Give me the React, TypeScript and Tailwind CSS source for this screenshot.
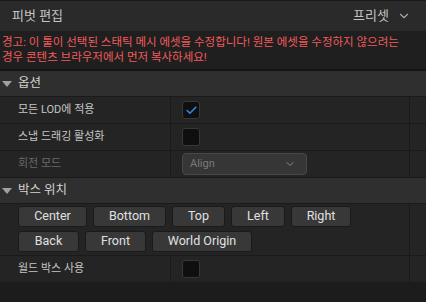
import { Check, ChevronDown } from "lucide-react";

const font = { fontFamily: 'Roboto, "Noto Sans CJK KR", sans-serif' };

const SectionHeader = ({ title }: { title: string }) => (
  <div className="h-[26px] bg-[#2f2f2f] border-b border-[#1a1a1a] flex items-center">
    <svg width="10" height="6" viewBox="0 0 10 6" className="ml-[2px] mr-[6px]">
      <path d="M0 0 L10 0 L5 6 Z" fill="#a0a0a0" />
    </svg>
    <span className="text-[12.5px] text-[#d4d4d4]">{title}</span>
  </div>
);

const Row = ({
  label,
  disabled,
  children,
}: {
  label: string;
  disabled?: boolean;
  children?: React.ReactNode;
}) => (
  <div className="h-[27px] bg-[#242424] border-b border-[#1a1a1a] flex">
    <div
      className={`w-[171px] border-r border-[#1a1a1a] pl-[18px] flex items-center text-[11px] ${
        disabled ? "text-[#6a6a6a]" : "text-[#c4c4c4]"
      }`}
    >
      {label}
    </div>
    <div className="w-[239px] border-r border-[#1a1a1a] pl-[11px] flex items-center">
      {children}
    </div>
    <div className="flex-1" />
  </div>
);

const CheckBox = ({ checked }: { checked?: boolean }) => (
  <div className="w-[18px] h-[18px] rounded-[3px] bg-[#0f0f0f] border border-[#383838] flex items-center justify-center">
    {checked && <Check size={13} strokeWidth={3} color="#2a8cf0" />}
  </div>
);

const BoxButton = ({ label, width }: { label: string; width: string }) => (
  <button
    type="button"
    className={`${width} h-[21px] rounded-[3px] bg-[#383838] border border-[#1a1a1a] text-[12.5px] text-[#e0e0e0] flex items-center justify-center`}
  >
    {label}
  </button>
);

const App = () => {
  return (
    <div className="w-[426px] h-[302px] bg-[#1c1c1c] overflow-hidden select-none" style={font}>
      <div className="h-[31px] bg-[#2a2a2a] border-t border-[#1a1a1a] flex items-center justify-between pl-[12px] pr-[15px]">
        <span className="text-[13px] text-[#c4c4c4]">피벗 편집</span>
        <div className="flex items-center gap-[8px] text-[13px] text-[#c4c4c4]">
          <span>프리셋</span>
          <ChevronDown size={14} strokeWidth={2} color="#a8a8a8" />
        </div>
      </div>

      <div className="h-[38px] bg-[#1f1f1f] pl-[2px] pt-[4px] text-[11.5px] leading-[15px] text-[#f25b5b]">
        <p>경고: 이 툴이 선택된 스태틱 메시 에셋을 수정합니다! 원본 에셋을 수정하지 않으려는</p>
        <p>경우 콘텐츠 브라우저에서 먼저 복사하세요!</p>
      </div>
      <div className="h-[2px] bg-[#141414]" />

      <SectionHeader title="옵션" />
      <Row label="모든 LOD에 적용">
        <CheckBox checked />
      </Row>
      <Row label="스냅 드래깅 활성화">
        <CheckBox />
      </Row>
      <Row label="회전 모드" disabled>
        <div className="w-[125px] h-[22px] rounded-[4px] bg-[#363636] border border-[#474747] flex items-center justify-between pl-[7px] pr-[10px]">
          <span className="text-[11px] text-[#7a7a7a]">Align</span>
          <ChevronDown size={12} strokeWidth={2} color="#8a8a8a" />
        </div>
      </Row>

      <SectionHeader title="박스 위치" />
      <div className="h-[52px] bg-[#242424] border-b border-[#1a1a1a] flex">
        <div className="w-[410px] border-r border-[#1a1a1a] pl-[18px] pt-[2px] flex flex-col gap-[4px]">
          <div className="flex gap-[6px]">
            <BoxButton label="Center" width="w-[69px]" />
            <BoxButton label="Bottom" width="w-[73px]" />
            <BoxButton label="Top" width="w-[53px]" />
            <BoxButton label="Left" width="w-[54px]" />
            <BoxButton label="Right" width="w-[60px]" />
          </div>
          <div className="flex gap-[6px]">
            <BoxButton label="Back" width="w-[61px]" />
            <BoxButton label="Front" width="w-[61px]" />
            <BoxButton label="World Origin" width="w-[100px]" />
          </div>
        </div>
        <div className="flex-1" />
      </div>
      <Row label="월드 박스 사용">
        <CheckBox />
      </Row>
    </div>
  );
};

export default App;
